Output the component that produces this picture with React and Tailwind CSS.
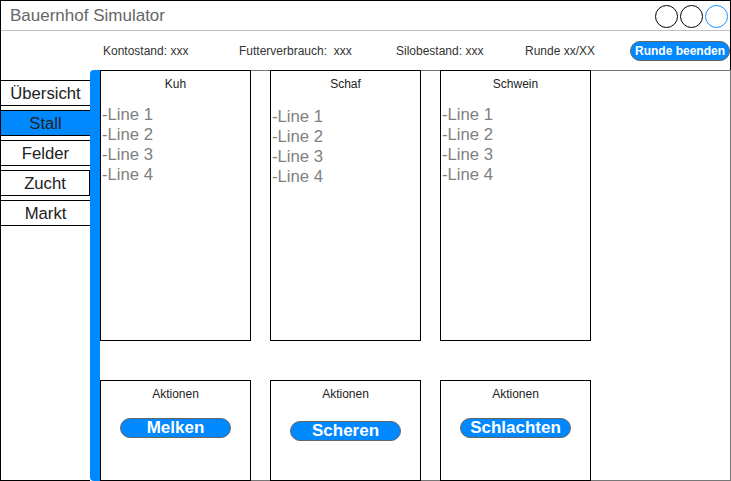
import React from "react";

const BLUE = "bg-[#0088ff]";

function TopBox({ title, lines, shift }) {
  return (
    <div className="h-[271px] border border-black flex flex-col">
      <div className="pt-[6px] h-[20px] text-[12px] leading-[14px] text-center text-[#222]">{title}</div>
      <div className={`${shift ? "pt-[16px]" : "pt-[14px]"} pl-[1px] text-[16.7px] leading-[20px] text-[#808080]`}>
        {lines.map((l) => (
          <div key={l}>{l}</div>
        ))}
      </div>
    </div>
  );
}

function ActionBox({ label, offset }) {
  return (
    <div className="h-[101px] border border-black flex flex-col items-center">
      <div className="pt-[6px] h-[20px] text-[12px] leading-[14px] text-[#222]">Aktionen</div>
      <div
        className={`${offset} w-[111px] h-[20px] ${BLUE} border border-[#666] rounded-full flex items-center justify-center text-white font-bold text-[17px] leading-[18px]`}
      >
        {label}
      </div>
    </div>
  );
}

export default function App() {
  const nav = ["Übersicht", "Stall", "Felder", "Zucht", "Markt"];
  const lines = ["-Line 1", "-Line 2", "-Line 3", "-Line 4"];
  return (
    <div className="w-[731px] h-[481px] flex flex-col bg-white font-['Liberation_Sans',Arial,sans-serif]">
      <div className="border-t border-x border-black">
        <div className="h-[30px] border-b border-[#c0c0c0] flex items-center justify-between">
          <div className="pl-[9px] text-[17px] text-[#666] leading-[20px]">Bauernhof Simulator</div>
          <div className="flex gap-[2px] pr-[2px] pt-[2px]">
            <div className="w-[23px] h-[23px] rounded-full border border-black" />
            <div className="w-[23px] h-[23px] rounded-full border border-black" />
            <div className="w-[23px] h-[23px] rounded-full border border-[#1a8cff]" />
          </div>
        </div>
        <div className="h-[39px] flex items-center pl-[102px] text-[12px] text-[#333] whitespace-pre">
          <div className="w-[136px]">Kontostand: xxx</div>
          <div className="w-[157px]">Futterverbrauch:  xxx</div>
          <div className="w-[129px]">Silobestand: xxx</div>
          <div className="w-[105px]">Runde xx/XX</div>
          <div className={`w-[100px] h-[20px] ${BLUE} border border-[#666] rounded-full flex items-center justify-center text-white font-bold text-[12px]`}>
            Runde beenden
          </div>
        </div>
      </div>
      <div className="flex h-[411px]">
        <div className="w-[90px] border-l border-b border-black pt-[10px] flex flex-col gap-[4px]">
          {nav.map((n) => (
            <div
              key={n}
              className={`h-[26px] pt-[2px] border-y border-black flex items-center justify-center text-[16.7px] text-[#222] ${
                n === "Stall" ? BLUE : ""
              } ${n === "Zucht" ? "border-r" : ""}`}
            >
              {n}
            </div>
          ))}
        </div>
        <div className={`w-[10px] ${BLUE} rounded-l-[4px]`} />
        <div className="flex-1 border-t border-r border-b border-[#777]">
          <div className="-mt-px flex gap-[19px]">
            <div className="w-[151px] flex flex-col gap-[39px]">
              <TopBox title="Kuh" lines={lines} />
              <ActionBox label="Melken" offset="mt-[17px]" />
            </div>
            <div className="w-[151px] flex flex-col gap-[39px]">
              <TopBox title="Schaf" lines={lines} shift />
              <ActionBox label="Scheren" offset="mt-[20px]" />
            </div>
            <div className="w-[151px] flex flex-col gap-[39px]">
              <TopBox title="Schwein" lines={lines} />
              <ActionBox label="Schlachten" offset="mt-[17px]" />
            </div>
          </div>
        </div>
      </div>
    </div>
  );
}
